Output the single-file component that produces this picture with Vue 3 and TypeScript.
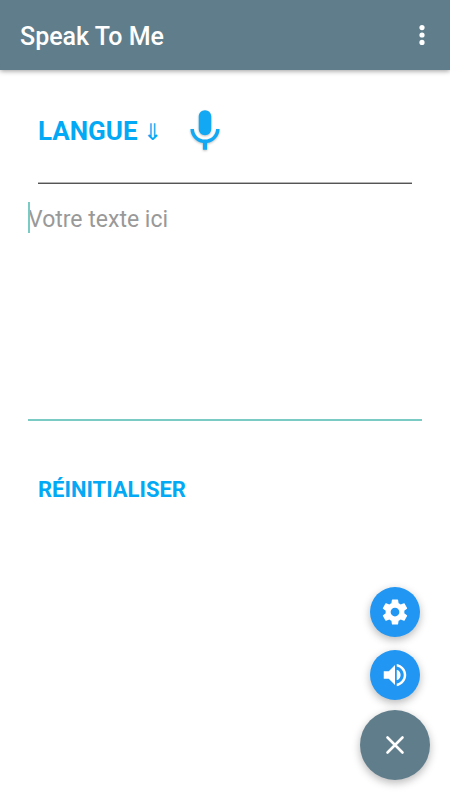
<script setup lang="ts">
import { ref } from 'vue'

const text = ref('')
const menuOpen = ref(true)

function reset(): void {
  text.value = ''
}
</script>

<template>
  <div class="app">
    <header class="bar">
      <h1 class="title">Speak To Me</h1>
      <button class="more" type="button" aria-label="Menu">
        <svg viewBox="0 0 8 20" width="8" height="20" aria-hidden="true">
          <circle cx="4" cy="2.6" r="2.6" />
          <circle cx="4" cy="10" r="2.6" />
          <circle cx="4" cy="17.4" r="2.6" />
        </svg>
      </button>
    </header>

    <main class="content">
      <div class="tools">
        <button class="language" type="button"><span>LANGUE</span><span class="arrow">⇓</span></button>
        <button class="mic" type="button" aria-label="Micro">
          <svg viewBox="0 0 24 24" width="50" height="50" aria-hidden="true">
            <path d="M12 14c1.66 0 2.99-1.34 2.99-3L15 5c0-1.66-1.34-3-3-3S9 3.34 9 5v6c0 1.66 1.34 3 3 3zm5.3-3c0 3-2.54 5.1-5.3 5.1S6.7 14 6.7 11H5c0 3.41 2.72 6.23 6 6.72V21h2v-3.28c3.28-.48 6-3.3 6-6.72h-1.7z" />
          </svg>
        </button>
      </div>
      <hr class="rule" />
      <div class="field">
        <textarea v-model="text" class="input" placeholder="Votre texte ici" aria-label="Votre texte"></textarea>
        <span v-if="!text" class="caret"></span>
      </div>
      <button class="reset" type="button" @click="reset">RÉINITIALISER</button>
    </main>

    <nav class="fabs" aria-label="Actions">
      <div v-if="menuOpen" class="actions">
        <button class="fab" type="button" aria-label="Paramètres">
          <svg viewBox="0 0 24 24" width="30" height="30" aria-hidden="true">
            <path d="M19.43 12.98c.04-.32.07-.64.07-.98s-.03-.66-.07-.98l2.11-1.65c.19-.15.24-.42.12-.64l-2-3.46c-.12-.22-.39-.3-.61-.22l-2.49 1c-.52-.4-1.08-.73-1.69-.98l-.38-2.65C14.46 2.18 14.25 2 14 2h-4c-.25 0-.46.18-.49.42l-.38 2.65c-.61.25-1.17.59-1.69.98l-2.49-1c-.23-.09-.49 0-.61.22l-2 3.46c-.13.22-.07.49.12.64l2.11 1.65c-.04.32-.07.65-.07.98s.03.66.07.98l-2.11 1.65c-.19.15-.24.42-.12.64l2 3.46c.12.22.39.3.61.22l2.49-1c.52.4 1.08.73 1.69.98l.38 2.65c.03.24.24.42.49.42h4c.25 0 .46-.18.49-.42l.38-2.65c.61-.25 1.17-.59 1.69-.98l2.49 1c.23.09.49 0 .61-.22l2-3.46c.12-.22.07-.49-.12-.64l-2.11-1.65zM12 15.5c-1.93 0-3.5-1.57-3.5-3.5s1.57-3.5 3.5-3.5 3.5 1.57 3.5 3.5-1.57 3.5-3.5 3.5z" />
          </svg>
        </button>
        <button class="fab" type="button" aria-label="Lire le texte">
          <svg viewBox="0 0 24 24" width="30" height="30" aria-hidden="true">
            <path d="M3 9v6h4l5 5V4L7 9H3zM16.5 12c0-1.77-1.02-3.29-2.5-4.03h-.6v8.05h.6c1.48-.73 2.5-2.25 2.5-4.02zM13.4 3.1v2.06c3.2.6 5.6 3.54 5.6 6.84s-2.4 6.24-5.6 6.84v2.06c4.3-.7 7.6-4.36 7.6-8.9s-3.3-8.2-7.6-8.9z" />
          </svg>
        </button>
      </div>
      <button class="fab main" type="button" aria-label="Fermer" @click="menuOpen = !menuOpen">
        <svg viewBox="0 0 20 20" width="20" height="20" aria-hidden="true">
          <path class="cross" d="M2.5 2.5l15 15M17.5 2.5l-15 15" />
        </svg>
      </button>
    </nav>
  </div>
</template>

<style>
body {
  margin: 0;
  background: #fff;
}
</style>

<style scoped>
.app {
  position: relative;
  display: flex;
  flex-direction: column;
  min-height: 100vh;
  font-family: Roboto, "Liberation Sans", sans-serif;
}

button {
  margin: 0;
  padding: 0;
  border: 0;
  background: none;
  font-family: inherit;
  cursor: pointer;
}

svg {
  display: block;
  fill: currentColor;
}

.bar {
  display: flex;
  align-items: center;
  justify-content: space-between;
  height: 70px;
  padding: 0 20px;
  background: #607d8b;
  color: #fff;
  box-shadow: 0 1px 5px rgba(0, 0, 0, 0.4);
}

.title {
  margin: 0;
  padding-top: 4px;
  font-size: 25px;
  line-height: 32px;
  font-weight: 500;
}

.more {
  display: flex;
  justify-content: center;
  width: 16px;
  color: #fff;
}

.content {
  display: flex;
  flex-direction: column;
  padding: 36px 28px 0;
}

.tools {
  display: flex;
  align-items: center;
  gap: 18px;
  padding: 0 10px;
}

.language,
.reset {
  color: #03a9f4;
  font-weight: 700;
}

.language {
  display: flex;
  align-items: baseline;
  gap: 5px;
  font-size: 26px;
  line-height: 32px;
}

.arrow {
  font-size: 23px;
  line-height: 24px;
  font-weight: 400;
}

.mic {
  color: #12a8f4;
  filter: drop-shadow(0 1px 1px rgba(0, 0, 0, 0.25));
}

.rule {
  width: auto;
  align-self: stretch;
  height: 0;
  margin: 26px 10px 0;
  border: 0;
  border-top: 1px solid #b4b4b4;
  border-bottom: 1px solid #555;
}

.field {
  position: relative;
  margin-top: 18px;
}

.input {
  display: block;
  box-sizing: border-box;
  width: 100%;
  height: 219px;
  margin: 0;
  padding: 0;
  border: 0;
  border-bottom: 2px solid #79cbc3;
  outline: 0;
  resize: none;
  background: transparent;
  color: #333;
  font-family: inherit;
  font-size: 23px;
  line-height: 36px;
}

.input::placeholder {
  color: #999;
  opacity: 1;
}

.caret {
  position: absolute;
  top: 0;
  left: 0;
  width: 2px;
  height: 31px;
  background: #79cbc3;
}

.reset {
  align-self: flex-start;
  margin: 53px 10px 0;
  font-size: 22px;
  line-height: 32px;
}

.fabs {
  position: absolute;
  right: 20px;
  bottom: 20px;
  display: flex;
  flex-direction: column;
  align-items: center;
  gap: 10px;
}

.actions {
  display: flex;
  flex-direction: column;
  gap: 13px;
}

.fab {
  display: flex;
  align-items: center;
  justify-content: center;
  width: 50px;
  height: 50px;
  border-radius: 50%;
  background: #2196f3;
  color: #fff;
  box-shadow: 0 3px 8px rgba(0, 0, 0, 0.28);
}

.main {
  width: 70px;
  height: 70px;
  background: #607d8b;
}

.cross {
  fill: none;
  stroke: currentColor;
  stroke-width: 2.6;
  stroke-linecap: round;
}
</style>
